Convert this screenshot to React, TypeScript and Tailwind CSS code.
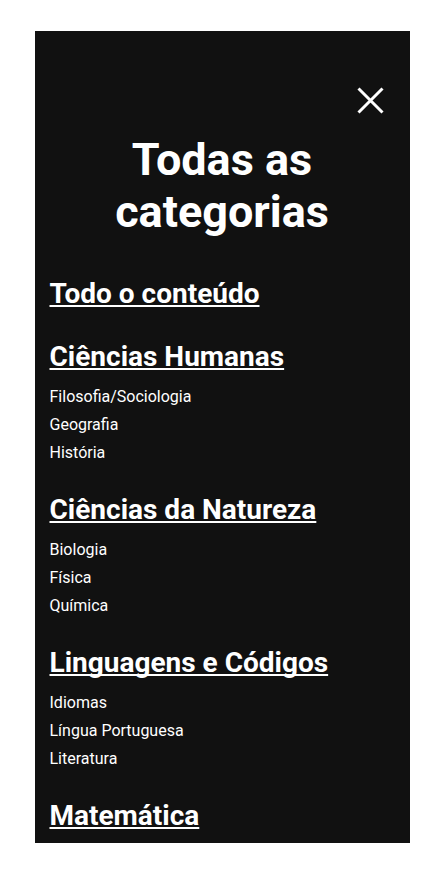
import React from "react";

const sections = [
  { title: "Ciências Humanas", items: ["Filosofia/Sociologia", "Geografia", "História"] },
  { title: "Ciências da Natureza", items: ["Biologia", "Física", "Química"] },
  { title: "Linguagens e Códigos", items: ["Idiomas", "Língua Portuguesa", "Literatura"] },
  { title: "Matemática", items: [] as string[] },
];

const headingCls =
  "block font-bold text-[28px] leading-[32px] underline decoration-2 underline-offset-[2px] [text-decoration-skip-ink:none]";

export default function App() {
  return (
    <div className="min-h-screen bg-white flex justify-center pt-[31px]" style={{ fontFamily: "Roboto, 'Noto Sans', sans-serif" }}>
      <div className="w-[375px] h-[812px] overflow-hidden bg-[#111111] text-white flex flex-col">
        <div className="flex justify-end pt-[56px] pr-[26px]">
          <button className="w-[27px] h-[27px] flex items-center justify-center" aria-label="Fechar">
            <svg width="27" height="27" viewBox="0 0 27 27" fill="none" stroke="white" strokeWidth="3">
              <path d="M1.5 1.5 L25.5 25.5 M25.5 1.5 L1.5 25.5" />
            </svg>
          </button>
        </div>
        <h1 className="mt-[20px] text-center font-bold text-[45px] leading-[52px]">
          Todas as
          <br />
          categorias
        </h1>
        <nav className="px-[15px] mt-[40px]">
          <a className={headingCls} href="#">
            Todo o conteúdo
          </a>
          {sections.map((s, i) => (
            <div key={s.title} className={i === 0 ? "mt-[31px]" : "mt-[27px]"}>
              <a className={headingCls} href="#">
                {s.title}
              </a>
              {s.items.length > 0 && (
                <ul className="mt-[10px]">
                  {s.items.map((it) => (
                    <li key={it} className="text-[16px] leading-[28px]">
                      {it}
                    </li>
                  ))}
                </ul>
              )}
            </div>
          ))}
        </nav>
      </div>
    </div>
  );
}
